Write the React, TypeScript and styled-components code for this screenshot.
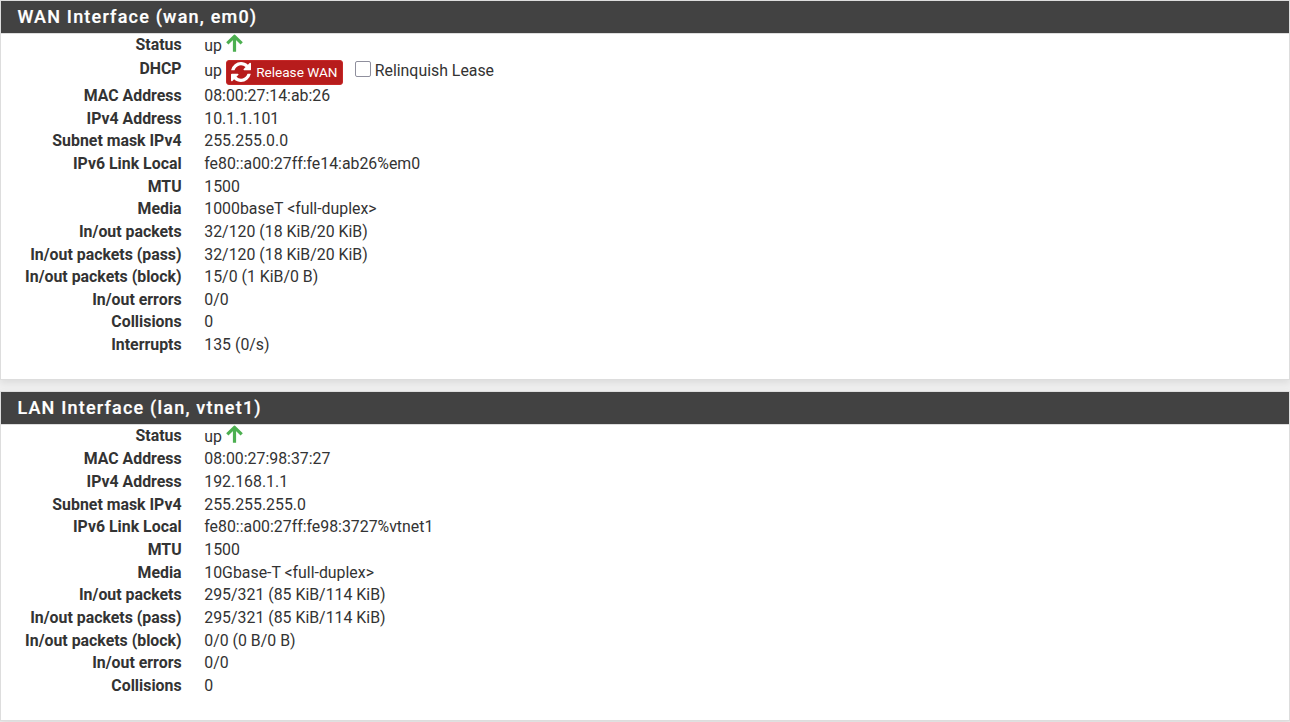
import React from "react";
import styled, { createGlobalStyle } from "styled-components";

const GlobalStyle = createGlobalStyle`
  * { box-sizing: border-box; }
  html, body { margin: 0; padding: 0; background: #efefef; overflow: hidden; }
  body {
    font-family: Roboto, "Liberation Sans", sans-serif;
    font-size: 15.87px;
    line-height: 22.67px;
    color: #333;
  }
`;

const Page = styled.main`
  display: flex;
  flex-direction: column;
  gap: 11px;
  height: 722px;
  overflow: hidden;
`;

const Panel = styled.section<{ $height: number }>`
  flex: none;
  height: ${(p) => p.$height}px;
  background: #fff;
  border: 1px solid #ddd;
  box-shadow: 0 3px 7px rgba(0, 0, 0, 0.08);
`;

const Heading = styled.h2`
  height: 33px;
  margin: 0;
  padding: 0 16.4px;
  border-bottom: 1px solid #ddd;
  background: #424242;
  color: #fff;
  font-size: 18px;
  font-weight: 500;
  line-height: 31px;
  letter-spacing: 1.2px;
  -webkit-text-stroke: 0.2px #fff;
`;

const Details = styled.dl`
  margin: 0;
`;

const Row = styled.div<{ $height?: number }>`
  display: grid;
  grid-template-columns: 180.6px 1fr;
  column-gap: 22.7px;
  height: ${(p) => p.$height ?? 22.67}px;
`;

const Term = styled.dt`
  text-align: right;
  font-weight: 700;
  white-space: nowrap;
`;

const Value = styled.dd<{ $drop?: number }>`
  display: flex;
  align-items: flex-start;
  margin: 0;
  padding-top: ${(p) => p.$drop ?? 0}px;
  white-space: nowrap;
`;

const UpArrow = styled.svg`
  width: 18px;
  height: 18px;
  margin: -1px 0 0 4.2px;
  fill: none;
  stroke: #4caf50;
  stroke-width: 3.2;
  stroke-linejoin: round;
`;

const ReleaseButton = styled.button`
  display: flex;
  align-items: center;
  gap: 5px;
  width: 117px;
  height: 25px;
  margin: 0.4px 12px 0 4.2px;
  padding: 0 4px 1px;
  border: 1px solid #c62828;
  border-radius: 3px;
  background: #b71c1c;
  color: #fff;
  font: 400 13.6px/20px Roboto, sans-serif;
  white-space: nowrap;
`;

const RefreshGlyph = styled.svg`
  flex: none;
  width: 20px;
  height: 20px;
  fill: #fff;
`;

const Lease = styled.label`
  display: flex;
  align-items: flex-start;
`;

const LeaseBox = styled.input`
  appearance: none;
  width: 16px;
  height: 16px;
  margin: 1.4px 3.6px 0 0;
  border: 1px solid #8f8f9d;
  border-radius: 2px;
  background: #fff;
`;

const Arrow = () => (
  <UpArrow viewBox="0 0 18 18">
    <path d="M8.5 17.8V2.400M1.300 9.300L8.5 2.300L15.700 9.300" />
  </UpArrow>
);

const Refresh = () => (
  <RefreshGlyph viewBox="0 0 1536 1536">
    <path d="M1511 928q0 5-1 7-64 268-268 434.500T764 1536q-146 0-282.500-55T238 1324l-129 129q-19 19-45 19t-45-19-19-45V960q0-26 19-45t45-19h448q26 0 45 19t19 45-19 45l-137 137q71 66 161 102t187 36q134 0 250-65t186-179q11-17 53-117 8-23 30-23h192q13 0 22.500 9.500t9.500 22.500zM1536 128v448q0 26-19 45t-45 19h-448q-26 0-45-19t-19-45 19-45l138-138Q969 256 768 256q-134 0-250 65T332 500q-11 17-53 117-8 23-30 23H50q-13 0-22.500-9.500T18 608v-7q65-268 270-434.500T768 0q146 0 284 55.500T1297 212l130-129q19-19 45-19t45 19 19 45z" />
  </RefreshGlyph>
);

type Entry = [string, string];

const wan: Entry[] = [
  ["MAC Address", "08:00:27:14:ab:26"],
  ["IPv4 Address", "10.1.1.101"],
  ["Subnet mask IPv4", "255.255.0.0"],
  ["IPv6 Link Local", "fe80::a00:27ff:fe14:ab26%em0"],
  ["MTU", "1500"],
  ["Media", "1000baseT <full-duplex>"],
  ["In/out packets", "32/120 (18 KiB/20 KiB)"],
  ["In/out packets (pass)", "32/120 (18 KiB/20 KiB)"],
  ["In/out packets (block)", "15/0 (1 KiB/0 B)"],
  ["In/out errors", "0/0"],
  ["Collisions", "0"],
  ["Interrupts", "135 (0/s)"],
];

const lan: Entry[] = [
  ["MAC Address", "08:00:27:98:37:27"],
  ["IPv4 Address", "192.168.1.1"],
  ["Subnet mask IPv4", "255.255.255.0"],
  ["IPv6 Link Local", "fe80::a00:27ff:fe98:3727%vtnet1"],
  ["MTU", "1500"],
  ["Media", "10Gbase-T <full-duplex>"],
  ["In/out packets", "295/321 (85 KiB/114 KiB)"],
  ["In/out packets (pass)", "295/321 (85 KiB/114 KiB)"],
  ["In/out packets (block)", "0/0 (0 B/0 B)"],
  ["In/out errors", "0/0"],
  ["Collisions", "0"],
];

const Entries = ({ items }: { items: Entry[] }) => (
  <>
    {items.map(([term, value]) => (
      <Row key={term}>
        <Term>{term}</Term>
        <Value>{value}</Value>
      </Row>
    ))}
  </>
);

const StatusRow = ({ height }: { height?: number }) => (
  <Row $height={height}>
    <Term>Status</Term>
    <Value $drop={1}>
      up
      <Arrow />
    </Value>
  </Row>
);

export default function App() {
  return (
    <>
      <GlobalStyle />
      <Page>
        <Panel $height={380}>
          <Heading>WAN Interface (wan, em0)</Heading>
          <Details>
            <StatusRow height={23.7} />
            <Row $height={27.22}>
              <Term>DHCP</Term>
              <Value $drop={2}>
                up
                <ReleaseButton type="button">
                  <Refresh />
                  Release WAN
                </ReleaseButton>
                <Lease>
                  <LeaseBox type="checkbox" />
                  Relinquish Lease
                </Lease>
              </Value>
            </Row>
            <Entries items={wan} />
          </Details>
        </Panel>
        <Panel $height={330}>
          <Heading>LAN Interface (lan, vtnet1)</Heading>
          <Details>
            <StatusRow height={23.38} />
            <Entries items={lan} />
          </Details>
        </Panel>
      </Page>
    </>
  );
}
